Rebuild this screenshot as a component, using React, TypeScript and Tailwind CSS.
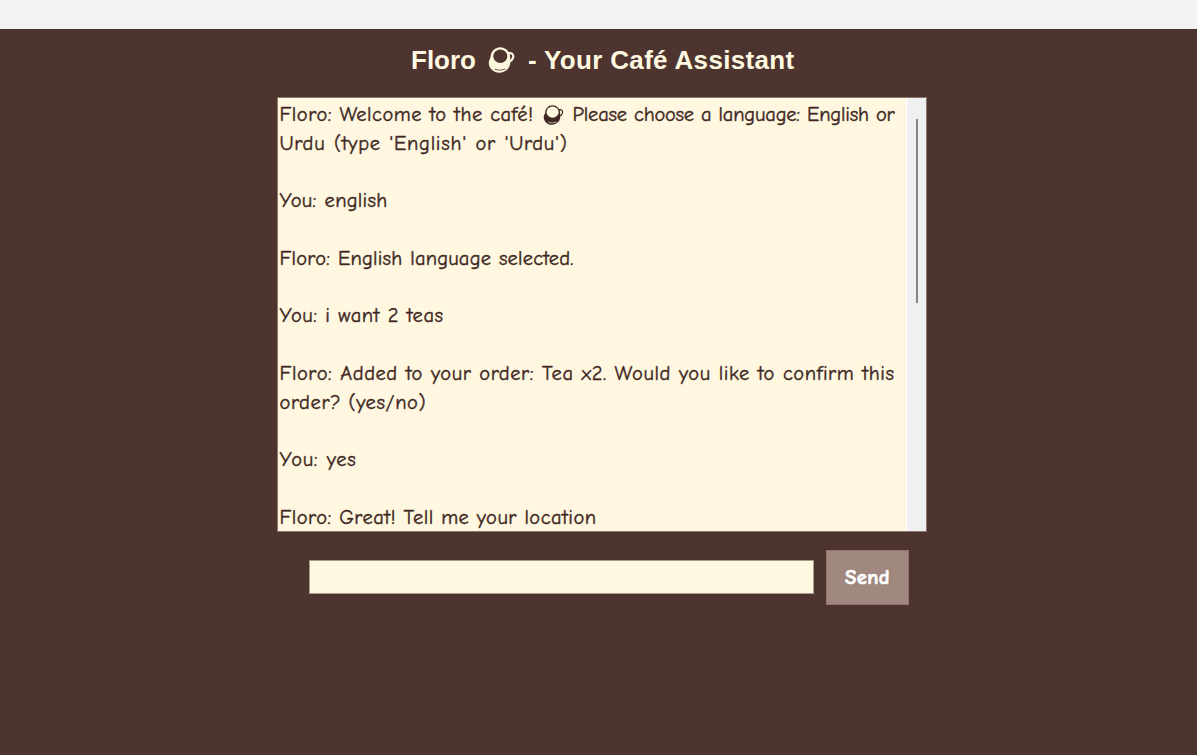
type CupProps = { className: string; hole: string; bold?: boolean };

function Cup({ className, hole, bold }: CupProps) {
  return (
    <svg viewBox="0 0 26 26" className={className} fill="none" aria-hidden="true">
      <path d="M19.500 7C22.500 5 25.200 7 24.700 10S22 14.500 18.500 15.200" stroke="currentColor" strokeWidth={bold ? 2.2 : 1.6} />
      <path d="M2.200 9C2.700 4 7 .3 11.700.3S21.300 4 21.500 9L21.800 15C22 21 17 25.700 11 25.700S0 21 .3 15.500C.5 12.500 2 12 2.200 9Z" fill="currentColor" />
      <ellipse cx="11.800" cy="9.300" rx={bold ? 7 : 7.900} ry={bold ? 6.700 : 7.300} fill={hole} />
      <path d="M6 22.300Q11 24.300 17 22.100" stroke={hole} strokeWidth=".8" />
    </svg>
  );
}

type Line = { text: string; fit: string; cup?: string };

const lines: Line[] = [
  { text: "Floro: Welcome to the café!", cup: "Please choose a language: English or", fit: "w-[254px] tracking-[0.500px]" },
  { text: "Urdu (type 'English' or 'Urdu')", fit: "w-[288px] tracking-[0.700px]" },
  { text: "", fit: "" },
  { text: "You: english", fit: "w-[108px] tracking-[0.250px]" },
  { text: "", fit: "" },
  { text: "Floro: English language selected.", fit: "w-[294px] tracking-[0.180px]" },
  { text: "", fit: "" },
  { text: "You: i want 2 teas", fit: "w-[164px] tracking-[0.500px]" },
  { text: "", fit: "" },
  { text: "Floro: Added to your order: Tea x2. Would you like to confirm this", fit: "w-[615px] tracking-[0.550px]" },
  { text: "order? (yes/no)", fit: "w-[146px] tracking-[0.600px]" },
  { text: "", fit: "" },
  { text: "You: yes", fit: "w-[77px] tracking-[0.700px]" },
  { text: "", fit: "" },
  { text: "Floro: Great! Tell me your location", fit: "w-[317px] tracking-[0.450px]" },
];

export default function App() {
  return (
    <div className="flex h-screen flex-col overflow-hidden bg-[#4e342e]">
      <div className="h-[29px] shrink-0 bg-[#f3f3f3]" />
      <h1 className="mt-[15px] flex h-8 shrink-0 items-center pl-[411px] font-['Liberation_Sans',sans-serif] text-[26px] font-bold whitespace-pre text-[#fff8e1]">
        <span className="w-[77px]">Floro</span>
        <Cup className="h-[26px] w-[27px]" hole="#4e342e" bold />
        <span className="ml-[13px] tracking-[0.330px]">- Your Café Assistant</span>
      </h1>
      <main className="mt-[21px] ml-[277px] flex h-[435px] w-[650px] shrink-0 overflow-hidden border border-[#8c776c] bg-[#fff7df]">
        <div className="w-[628px] pt-[3px] pl-[1.500px] font-['Comic_Sans_MS','Comic_Neue','Open_Sans',sans-serif] text-[20.500px] text-[#3e2723] [-webkit-text-stroke:0.400px_#3e2723]">
          {lines.map((line, i) => (
            <div key={i} className="flex h-[28.750px] items-center leading-[28.750px] whitespace-nowrap">
              <div className={`${line.fit} [text-align-last:justify]`}>{line.text}</div>
              {line.cup && (
                <>
                  <Cup className="ml-[9px] h-5 w-[21px]" hole="#fff7df" />
                  <div className="ml-[9px] w-[322px] tracking-[-0.200px] [text-align-last:justify]">{line.cup}</div>
                </>
              )}
            </div>
          ))}
        </div>
        <div className="flex w-5 justify-center border-l border-white bg-[#f0f0f0] pt-[21px]">
          <div className="h-[184px] w-[2px] bg-[#858585]" />
        </div>
      </main>
      <form className="mt-[18px] ml-[309px] flex shrink-0 items-start" onSubmit={(e) => e.preventDefault()}>
        <input aria-label="Message" className="mt-[10px] h-[34px] w-[505px] border border-[#a99c8b] bg-[#fff8e1] px-1 text-xl text-[#3e2723] outline-none" />
        <button className="ml-3 h-[55px] w-[83px] border border-[#92776f] bg-[#a1887f] pt-0.5 font-['Comic_Sans_MS','Comic_Neue','Open_Sans',sans-serif] text-[20.500px] font-bold tracking-[0.500px] text-white [-webkit-text-stroke:0.700px_white]">
          Send
        </button>
      </form>
    </div>
  );
}
